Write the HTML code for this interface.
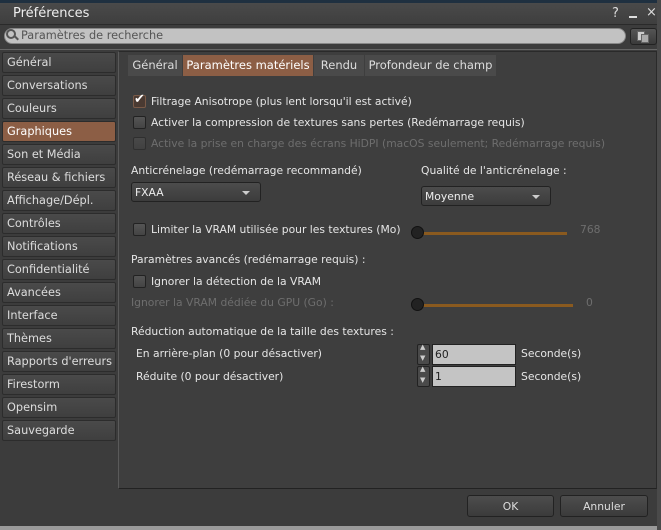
<!DOCTYPE html>
<html><head><meta charset="utf-8"><style>
*{box-sizing:border-box;margin:0;padding:0}
body{width:661px;height:530px;overflow:hidden;background:#3c3c3c;font-family:"DejaVu Sans","Liberation Sans",sans-serif;font-size:10.75px;color:#e6e6e6;position:relative}
.a{position:absolute;white-space:nowrap}
.nav{position:absolute;left:2px;width:114px;height:21px;background:linear-gradient(#4a4a4a,#3f3f3f);border:1px solid #2c2c2c;border-radius:2px;padding:3px 0 0 4px;font-size:11.3px;color:#ddd}
.nav.sel{background:#8c5e45;color:#fff}
.tab{position:absolute;top:55px;height:21px;background:#4a4a4a;padding:3px 0 0 0;text-align:center;font-size:11.5px;color:#ddd}
.cb{position:absolute;width:13px;height:13px;border:1px solid #222;border-radius:2px;background:linear-gradient(#555,#444)}
.dis{color:#6e6e6e}
.combo{position:absolute;height:20px;background:linear-gradient(#4c4c4c,#3c3c3c);border:1px solid #222;border-radius:3px;padding:3px 0 0 3px;color:#eee}
.combo:after{content:"";position:absolute;right:10px;top:8px;border:4px solid transparent;border-top:4px solid #ccc;border-bottom:0}
.track{position:absolute;height:3px;background:#8a5a1f}
.knob{position:absolute;width:13px;height:13px;border-radius:50%;background:#222;border:1px solid #111}
.spin{position:absolute;left:417px;width:13px;height:21px;border:1px solid #222;border-radius:2px;background:#4a4a4a}
.field{position:absolute;left:432px;width:84px;height:21px;background:#c4c4c4;border:1px solid #222;color:#222;padding:3px 0 0 2px}
.btn{position:absolute;top:495px;height:22px;background:linear-gradient(#4d4d4d,#3b3b3b);border:1px solid #222;border-radius:3px;text-align:center;padding-top:4px;color:#ddd}
</style></head><body>
<div class="a" style="left:0;top:0;width:661px;height:3px;background:#1f3040"></div>
<div class="a" style="left:0;top:3px;width:661px;height:22px;background:linear-gradient(#4a4a4a,#3e3e3e)"></div>
<div class="a" style="left:13px;top:6px;font-size:13px;color:#eee">Préférences</div>
<div class="a" style="left:612px;top:6px;font-size:13px;color:#ddd">?</div>
<div class="a" style="left:629px;top:16px;width:8px;height:2px;background:#ddd"></div>
<div class="a" style="left:646px;top:5px;font-size:13px;color:#ddd">×</div>
<div class="a" style="left:0;top:24px;width:661px;height:1px;background:#2a2a2a"></div>
<div class="a" style="left:4px;top:28px;width:622px;height:16px;background:#c2c2c2;border-radius:8px;border:1px solid #888"></div>
<div class="a" style="left:6px;top:29px;width:10px;height:10px;border:2px solid #555;border-radius:50%"></div>
<div class="a" style="left:14px;top:37px;width:5px;height:2px;background:#555;transform:rotate(45deg)"></div>
<div class="a" style="left:21px;top:29px;color:#555;font-size:11.3px">Paramètres de recherche</div>
<div class="a" style="left:630px;top:28px;width:27px;height:17px;background:linear-gradient(#555,#3a3a3a);border:1px solid #222;border-radius:3px"></div>
<div class="a" style="left:637px;top:31px;width:8px;height:10px;background:#ccc;border:1px solid #666"></div>
<div class="a" style="left:641px;top:34px;width:8px;height:9px;background:#aaa;border:1px solid #666"></div>
<div class="a" style="left:0;top:49px;width:661px;height:1px;background:#666"></div>

<div class="nav" style="top:52px">Général</div>
<div class="nav" style="top:75px">Conversations</div>
<div class="nav" style="top:98px">Couleurs</div>
<div class="nav sel" style="top:121px">Graphiques</div>
<div class="nav" style="top:144px">Son et Média</div>
<div class="nav" style="top:167px">Réseau &amp; fichiers</div>
<div class="nav" style="top:190px">Affichage/Dépl.</div>
<div class="nav" style="top:213px">Contrôles</div>
<div class="nav" style="top:236px">Notifications</div>
<div class="nav" style="top:259px">Confidentialité</div>
<div class="nav" style="top:282px">Avancées</div>
<div class="nav" style="top:305px">Interface</div>
<div class="nav" style="top:328px">Thèmes</div>
<div class="nav" style="top:351px">Rapports d'erreurs</div>
<div class="nav" style="top:374px">Firestorm</div>
<div class="nav" style="top:397px">Opensim</div>
<div class="nav" style="top:420px">Sauvegarde</div>

<div class="a" style="left:118px;top:51px;width:539px;height:438px;border-left:1px solid #5a5a5a;border-top:1px solid #2a2a2a;border-bottom:1px solid #222;border-right:1px solid #2a2a2a;background:#3e3e3e"></div>
<div class="tab" style="left:128px;width:54px">Général</div>
<div class="tab" style="left:183px;width:130px;background:#8c5e45;color:#fff">Paramètres matériels</div>
<div class="tab" style="left:314px;width:50px">Rendu</div>
<div class="tab" style="left:365px;width:131px">Profondeur de champ</div>

<div class="cb" style="left:133px;top:95px;background:#4a3a32;border-color:#7a5a48"></div>
<div class="a" style="left:134px;top:92px;font-size:13px;color:#fff">✔</div>
<div class="a" style="left:151px;top:95px">Filtrage Anisotrope (plus lent lorsqu'il est activé)</div>
<div class="cb" style="left:133px;top:116px"></div>
<div class="a" style="left:151px;top:116px">Activer la compression de textures sans pertes (Redémarrage requis)</div>
<div class="cb" style="left:133px;top:137px;opacity:.5"></div>
<div class="a dis" style="left:151px;top:137px">Active la prise en charge des écrans HiDPI (macOS seulement; Redémarrage requis)</div>

<div class="a" style="left:131px;top:164px">Anticrénelage (redémarrage recommandé)</div>
<div class="combo" style="left:131px;top:182px;width:130px">FXAA</div>
<div class="a" style="left:421px;top:164px">Qualité de l'anticrénelage :</div>
<div class="combo" style="left:421px;top:186px;width:130px">Moyenne</div>

<div class="cb" style="left:133px;top:223px"></div>
<div class="a" style="left:151px;top:223px">Limiter la VRAM utilisée pour les textures (Mo)</div>
<div class="track" style="left:418px;top:232px;width:149px"></div>
<div class="knob" style="left:411px;top:226px"></div>
<div class="a dis" style="left:580px;top:223px">768</div>

<div class="a" style="left:131px;top:253px">Paramètres avancés (redémarrage requis) :</div>
<div class="cb" style="left:133px;top:275px"></div>
<div class="a" style="left:151px;top:275px">Ignorer la détection de la VRAM</div>
<div class="a dis" style="left:131px;top:296px">Ignorer la VRAM dédiée du GPU (Go) :</div>
<div class="track" style="left:418px;top:304px;width:155px"></div>
<div class="knob" style="left:411px;top:298px"></div>
<div class="a dis" style="left:586px;top:296px">0</div>

<div class="a" style="left:131px;top:325px">Réduction automatique de la taille des textures :</div>
<div class="a" style="left:136px;top:347px">En arrière-plan (0 pour désactiver)</div>
<div class="spin" style="top:344px"></div><div class="a" style="left:420px;top:343px;font-size:7px;color:#ccc">▲</div><div class="a" style="left:420px;top:354px;font-size:7px;color:#ccc">▼</div>
<div class="field" style="top:344px">60</div>
<div class="a" style="left:521px;top:347px">Seconde(s)</div>
<div class="a" style="left:136px;top:370px">Réduite (0 pour désactiver)</div>
<div class="spin" style="top:366px"></div><div class="a" style="left:420px;top:365px;font-size:7px;color:#ccc">▲</div><div class="a" style="left:420px;top:376px;font-size:7px;color:#ccc">▼</div>
<div class="field" style="top:366px">1</div>
<div class="a" style="left:521px;top:370px">Seconde(s)</div>

<div class="btn" style="left:467px;width:87px">OK</div>
<div class="btn" style="left:560px;width:88px">Annuler</div>
<div class="a" style="left:0;top:526px;width:661px;height:4px;background:#9a9a9a"></div>
<div class="a" style="left:657px;top:0;width:4px;height:530px;background:#4a4a4a"></div>
</body></html>
